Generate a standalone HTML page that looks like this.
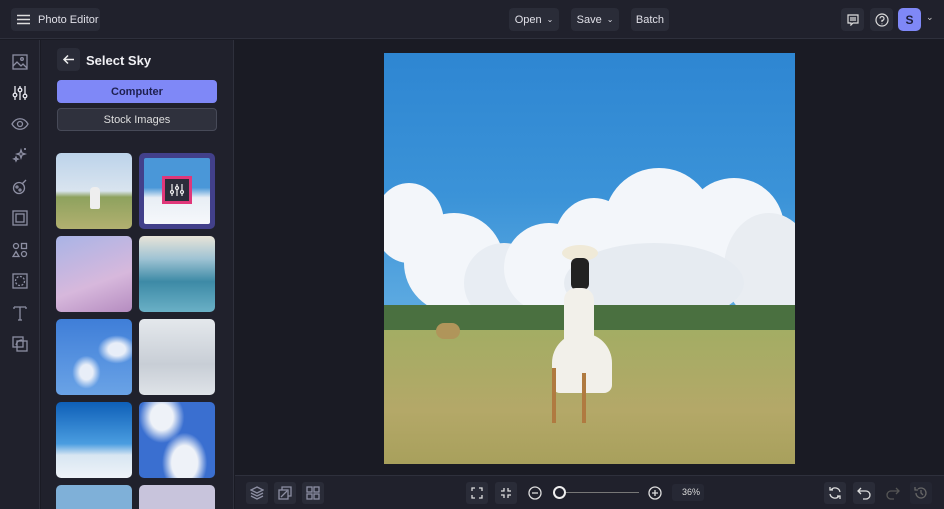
<!DOCTYPE html>
<html><head><meta charset="utf-8"><style>
*{margin:0;padding:0;box-sizing:border-box}
html,body{width:944px;height:509px;overflow:hidden}
body{background:#1a1b24;font-family:"Liberation Sans",sans-serif;color:#e6e6ee;position:relative}
.abs{position:absolute}
.top{left:0;top:0;width:944px;height:39px;background:#20212c;border-bottom:1px solid #2e303c}
.btn{position:absolute;background:#2a2c38;border-radius:4px;font-size:11px;color:#e0e0e8;display:flex;align-items:center;justify-content:center;gap:5px}
.rail{left:0;top:40px;width:40px;height:469px;background:#20212c;border-right:1px solid #2e303c}
.panel{left:41px;top:40px;width:193px;height:469px;background:#20212c;border-right:1px solid #2e303c;overflow:hidden}
.th{position:absolute;width:76px;height:76px;border-radius:5px;overflow:hidden}
.bot{left:235px;top:475px;width:709px;height:34px;background:#20212c;border-top:1px solid #2e303c}
.ib{position:absolute;width:22px;height:22px;border-radius:3px;background:#2a2c38}
svg.i{position:absolute;fill:none;stroke:#8d8fa3;stroke-width:1.3}
.c{position:absolute;border-radius:50%;background:#f3f6fa}
</style></head><body>
<div class="abs top">
  <div class="btn" style="left:11px;top:8px;width:89px;height:23px;justify-content:flex-start;padding-left:6px;gap:8px">
    <svg width="13" height="11" style="stroke:#ddd;stroke-width:1.5"><path d="M0 1.5h13M0 5.5h13M0 9.5h13"/></svg>Photo Editor</div>
  <div class="btn" style="left:509px;top:8px;width:50px;height:23px">Open <span style="font-size:8px">⌄</span></div>
  <div class="btn" style="left:571px;top:8px;width:48px;height:23px">Save <span style="font-size:8px">⌄</span></div>
  <div class="btn" style="left:631px;top:8px;width:38px;height:23px">Batch</div>
  <div class="btn" style="left:841px;top:8px;width:23px;height:23px"><svg width="12" height="12" style="fill:none;stroke:#ddd;stroke-width:1.2"><path d="M1 1h10v8H6l-2 2V9H1z M3 4h6M3 6h6"/></svg></div>
  <div class="btn" style="left:870px;top:8px;width:23px;height:23px"><svg width="14" height="14" style="fill:none;stroke:#ddd;stroke-width:1.2"><circle cx="7" cy="7" r="6"/><path d="M5 5.5a2 2 0 1 1 2 2v1.5M7 10.5v.8"/></svg></div>
  <div class="btn" style="left:898px;top:8px;width:23px;height:23px;background:#7f88f7;color:#1c1d3a;font-weight:bold;font-size:12px;border-radius:5px">S</div>
  <div class="abs" style="left:926px;top:12px;font-size:9px;color:#ccc">⌄</div>
</div>
<div class="abs rail">
  <svg class="i" style="left:12px;top:14px" width="16" height="16"><rect x="1" y="1" width="14" height="14"/><path d="M1 12l4-4 4 4 2-2 4 4"/><circle cx="10" cy="5" r="1.3"/></svg>
  <svg class="i" style="left:12px;top:45px;stroke:#e6e6ee" width="16" height="16"><path d="M3 1v14M8 1v14M13 1v14"/><circle cx="3" cy="10" r="1.8" fill="#20212c"/><circle cx="8" cy="5" r="1.8" fill="#20212c"/><circle cx="13" cy="11" r="1.8" fill="#20212c"/></svg>
  <svg class="i" style="left:11px;top:77px" width="18" height="14"><path d="M1 7c4-7 12-7 16 0c-4 7-12 7-16 0z"/><circle cx="9" cy="7" r="2.5"/></svg>
  <svg class="i" style="left:12px;top:107px" width="16" height="16"><path d="M9 3l1 3 3 1-3 1-1 3-1-3-3-1 3-1zM4 10l.6 1.5 1.5.6-1.5.6L4 14l-.6-1.5-1.5-.6 1.5-.6zM13 1v2M12 2h2"/></svg>
  <svg class="i" style="left:12px;top:139px" width="16" height="16"><circle cx="7" cy="9" r="5.5"/><circle cx="5" cy="8" r="1"/><circle cx="8" cy="11" r="1"/><path d="M10 5l4-4"/></svg>
  <svg class="i" style="left:12px;top:170px" width="16" height="16"><rect x="1" y="1" width="14" height="14"/><rect x="4" y="4" width="8" height="8"/></svg>
  <svg class="i" style="left:12px;top:202px" width="16" height="16"><circle cx="4" cy="4" r="2.5"/><rect x="9.5" y="1.5" width="5" height="5"/><path d="M4 9.5l3 5H1z"/><circle cx="12" cy="12" r="2.5"/></svg>
  <svg class="i" style="left:12px;top:233px" width="16" height="16"><rect x="1" y="1" width="14" height="14"/><circle cx="8" cy="8" r="4.5" stroke-dasharray="2 1.5"/></svg>
  <svg class="i" style="left:12px;top:265px" width="16" height="16"><path d="M2 2h12M8 2v13M6 15h4M2 2v2M14 2v2"/></svg>
  <svg class="i" style="left:12px;top:296px" width="16" height="16"><rect x="1" y="1" width="10" height="10"/><rect x="5" y="5" width="10" height="10"/><path d="M4 9c1-4 4-5 6-5"/></svg>
</div>
<div class="abs panel">
  <div class="abs" style="left:16px;top:8px;width:23px;height:23px;background:#2a2c38;border-radius:4px"><svg width="23" height="23" style="fill:none;stroke:#eee;stroke-width:1.5"><path d="M7 11.5h10M11 7.5l-4 4 4 4"/></svg></div>
  <div class="abs" style="left:45px;top:13px;font-size:13px;font-weight:bold;color:#f0f0f4">Select Sky</div>
  <div class="abs" style="left:16px;top:40px;width:160px;height:23px;background:#7f88f7;border-radius:4px;color:#1e2050;font-size:11px;font-weight:bold;display:flex;align-items:center;justify-content:center">Computer</div>
  <div class="abs" style="left:16px;top:68px;width:160px;height:23px;background:#2f313d;border:1px solid #474a58;border-radius:4px;color:#ddd;font-size:11px;display:flex;align-items:center;justify-content:center">Stock Images</div>
  <div class="th" style="left:15px;top:113px;background:linear-gradient(#bcd3ea 0%,#d9e4ef 50%,#8ea25e 58%,#b2b070 100%)"><div class="abs" style="left:34px;top:34px;width:10px;height:22px;background:#eee;border-radius:4px 4px 2px 2px"></div></div>
  <div class="th" style="left:98px;top:113px;background:#42408a;border:5px solid #42408a"><div style="width:100%;height:100%;background:linear-gradient(#4a97d8 45%,#e8eef5 60%,#f6f8fb);border-radius:2px"></div><div class="abs" style="left:18px;top:18px;width:30px;height:28px;border:3px solid #e0377a;background:#2b2d3a"><svg width="24" height="22" style="fill:none;stroke:#eee;stroke-width:1.2"><path d="M7 5v12M12 5v12M17 5v12"/><circle cx="7" cy="13" r="1.5" fill="#2b2d3a"/><circle cx="12" cy="9" r="1.5" fill="#2b2d3a"/><circle cx="17" cy="13" r="1.5" fill="#2b2d3a"/></svg></div></div>
  <div class="th" style="left:15px;top:196px;background:linear-gradient(160deg,#a9b4e6,#d7b8dc 60%,#b58cc0)"></div>
  <div class="th" style="left:98px;top:196px;background:linear-gradient(#e8e4d8 0%,#9fc3d4 30%,#3d8aa6 60%,#6ab0c6 100%)"></div>
  <div class="th" style="left:15px;top:279px;background:radial-gradient(ellipse at 40% 70%,#e8eef8 10%,transparent 22%),radial-gradient(ellipse at 80% 40%,#e8eef8 10%,transparent 22%),linear-gradient(#3f7ed8,#6aa3e6)"></div>
  <div class="th" style="left:98px;top:279px;background:linear-gradient(#e4e8ec,#c8ced6 60%,#dfe3e8)"></div>
  <div class="th" style="left:15px;top:362px;background:linear-gradient(#0e5fb8,#4a9de0 55%,#d8e6f2 70%,#eef3f8)"></div>
  <div class="th" style="left:98px;top:362px;background:radial-gradient(ellipse at 30% 20%,#eef2f8 15%,transparent 30%),radial-gradient(ellipse at 60% 80%,#eef2f8 20%,transparent 35%),#3a6fd0"></div>
  <div class="th" style="left:15px;top:445px;height:24px;border-radius:5px 5px 0 0;background:#7fb0d8"></div>
  <div class="th" style="left:98px;top:445px;height:24px;border-radius:5px 5px 0 0;background:#c8c4dc"></div>
</div>
<div class="abs" style="left:384px;top:53px;width:411px;height:411px;overflow:hidden;background:linear-gradient(#2e86d2 0%,#3b93d8 35%,#5aa8e0 60%)">
  <div class="c" style="left:-10px;top:130px;width:70px;height:80px"></div>
  <div class="c" style="left:20px;top:160px;width:100px;height:100px"></div>
  <div class="c" style="left:80px;top:190px;width:80px;height:80px;background:#e8edf3"></div>
  <div class="c" style="left:120px;top:170px;width:90px;height:90px"></div>
  <div class="c" style="left:170px;top:145px;width:80px;height:90px"></div>
  <div class="c" style="left:220px;top:115px;width:110px;height:110px"></div>
  <div class="c" style="left:300px;top:125px;width:100px;height:100px"></div>
  <div class="c" style="left:340px;top:160px;width:90px;height:110px;background:#e9edf2"></div>
  <div class="c" style="left:180px;top:190px;width:180px;height:80px;background:#e6ebf1"></div>
  <div class="abs" style="left:0;top:252px;width:411px;height:30px;background:#4a7040"></div>
  <div class="abs" style="left:0;top:277px;width:411px;height:134px;background:linear-gradient(#a3ad64,#b4a868 60%,#a8a05c)"></div>
  <div class="abs" style="left:52px;top:270px;width:24px;height:16px;background:#b0955a;border-radius:8px"></div>
  <div class="abs" style="left:178px;top:192px;width:36px;height:16px;background:#f0ead8;border-radius:50%"></div>
  <div class="abs" style="left:187px;top:205px;width:18px;height:32px;background:#222;border-radius:6px"></div>
  <div class="abs" style="left:180px;top:235px;width:30px;height:60px;background:#f2f0ea;border-radius:12px 12px 4px 4px"></div>
  <div class="abs" style="left:168px;top:280px;width:60px;height:60px;background:#f2f0ea;border-radius:30px 30px 8px 8px"></div>
  <div class="abs" style="left:168px;top:315px;width:4px;height:55px;background:#b07a40"></div>
  <div class="abs" style="left:198px;top:320px;width:4px;height:50px;background:#b07a40"></div>
</div>
<div class="abs bot">
  <div class="ib" style="left:11px;top:6px"></div><svg class="i" style="left:15px;top:10px" width="14" height="14"><path d="M7 1l6 3-6 3-6-3zM1 7l6 3 6-3M1 10l6 3 6-3"/></svg>
  <div class="ib" style="left:39px;top:6px"></div><svg class="i" style="left:43px;top:10px" width="14" height="14"><rect x="1" y="4" width="9" height="9"/><path d="M4 4V1h9v9h-3M3 11l6-6"/></svg>
  <div class="ib" style="left:67px;top:6px"></div><svg class="i" style="left:71px;top:10px" width="14" height="14"><rect x="1" y="1" width="5" height="5"/><rect x="8" y="1" width="5" height="5"/><rect x="1" y="8" width="5" height="5"/><rect x="8" y="8" width="5" height="5"/></svg>
  <div class="ib" style="left:231px;top:6px"></div><svg class="i" style="left:236px;top:11px;stroke:#ddd" width="12" height="12"><path d="M1 4V1h3M8 1h3v3M11 8v3H8M4 11H1V8"/></svg>
  <div class="ib" style="left:260px;top:6px"></div><svg class="i" style="left:265px;top:11px;stroke:#ddd" width="12" height="12"><path d="M1 4h3V1M8 1v3h3M11 8H8v3M4 11V8H1"/></svg>
  <svg class="i" style="left:293px;top:10px;stroke:#ddd" width="14" height="14"><circle cx="7" cy="7" r="6"/><path d="M4 7h6"/></svg>
  <div class="abs" style="left:318px;top:16px;width:86px;height:1px;background:#777"></div>
  <div class="abs" style="left:318px;top:10px;width:13px;height:13px;border:2px solid #eee;border-radius:50%;background:#20212c"></div>
  <svg class="i" style="left:413px;top:10px;stroke:#ddd" width="14" height="14"><circle cx="7" cy="7" r="6"/><path d="M4 7h6M7 4v6"/></svg>
  <div class="abs" style="left:437px;top:8px;width:32px;height:17px;background:#262834;border-radius:3px;font-size:9px;color:#ddd;text-align:right;padding:3px 4px 0 0">36%</div>
  <div class="ib" style="left:589px;top:6px"></div><svg class="i" style="left:593px;top:10px;stroke:#ddd" width="14" height="14"><path d="M12 6A5 5 0 0 0 3 4M2 1v3h3M2 8a5 5 0 0 0 9 2M12 13v-3H9"/></svg>
  <div class="ib" style="left:618px;top:6px"></div><svg class="i" style="left:622px;top:10px;stroke:#ddd" width="14" height="14"><path d="M4 2L1 5l3 3M1 5h8a4 4 0 0 1 0 8H6"/></svg>
  <svg class="i" style="left:651px;top:10px;stroke:#555" width="14" height="14"><path d="M10 2l3 3-3 3M13 5H5a4 4 0 0 0 0 8h3"/></svg>
  <div class="ib" style="left:675px;top:6px;background:#242632"></div><svg class="i" style="left:679px;top:10px;stroke:#666" width="14" height="14"><path d="M2 7a5 5 0 1 0 2-4M1 1v3h3M7 4v3l2 2"/></svg>
</div>
</body></html>
